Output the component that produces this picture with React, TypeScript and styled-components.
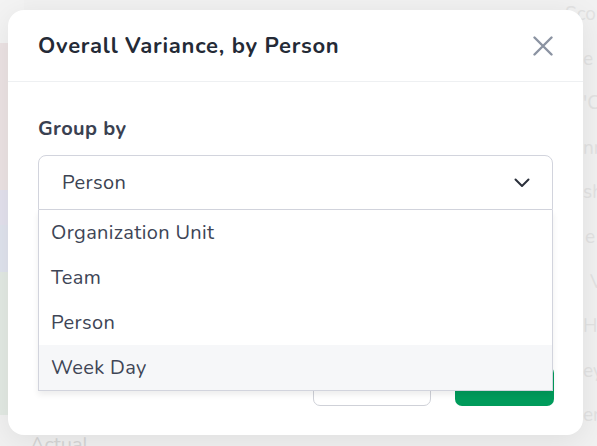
import React from "react";
import styled, { createGlobalStyle } from "styled-components";

const Global = createGlobalStyle`
  html, body { margin: 0; padding: 0; }
  body {
    width: 597px;
    height: 446px;
    overflow: hidden;
    background: #f2f2f2;
    font-family: "Nunito", "Lato", "Noto Sans", sans-serif;
  }
`;

const Page = styled.div`
  position: relative;
  width: 597px;
  height: 446px;
  display: flex;
  background: #f1f1f1;
`;

const LeftStrip = styled.div`
  width: 24px;
  display: flex;
  flex-direction: column;
`;

const StripBlock = styled.div<{ $h: number; $c: string }>`
  height: ${(p) => p.$h}px;
  background: ${(p) => p.$c};
  flex-shrink: 0;
`;

const Middle = styled.div`
  flex: 1;
  display: flex;
  flex-direction: column;
  justify-content: flex-end;
`;

const ActualText = styled.div`
  font-size: 20px;
  color: #d6d6d6;
  padding-left: 6px;
  height: 14px;
  line-height: 26px;
  overflow: hidden;
`;

const RightCol = styled.div`
  width: 32px;
  display: flex;
  flex-direction: column;
`;

const BgCell = styled.div<{ $indent: number }>`
  height: 45px;
  line-height: 28px;
  font-size: 19px;
  color: #e2e2e2;
  white-space: nowrap;
  overflow: hidden;
  padding-left: ${(p) => p.$indent}px;
`;

const Modal = styled.div`
  position: absolute;
  left: 8px;
  top: 10px;
  width: 575px;
  height: 425px;
  background: #ffffff;
  border-radius: 16px;
  box-shadow: 0 6px 30px rgba(0, 0, 0, 0.08);
  display: flex;
  flex-direction: column;
`;

const Header = styled.div`
  height: 72px;
  box-sizing: border-box;
  border-bottom: 1px solid #eef0f2;
  display: flex;
  align-items: center;
  justify-content: space-between;
  padding: 0 30px;
`;

const Title = styled.h2`
  margin: 0;
  font-size: 22px;
  font-weight: 700;
  color: #242a36;
  letter-spacing: 0.75px;
`;

const CloseButton = styled.button`
  border: none;
  background: none;
  padding: 0;
  width: 20px;
  height: 20px;
  display: flex;
  align-items: center;
  justify-content: center;
  cursor: pointer;
`;

const Body = styled.div`
  flex: 1;
  display: flex;
  flex-direction: column;
  padding: 34px 30px 0;
`;

const Label = styled.div`
  font-size: 20px;
  font-weight: 700;
  color: #3a4151;
  line-height: 26px;
  letter-spacing: 0.4px;
  margin-bottom: 13px;
`;

const SelectWrap = styled.div`
  position: relative;
`;

const SelectBox = styled.div`
  height: 55px;
  box-sizing: border-box;
  border: 1px solid #d2d4dd;
  border-radius: 8px 8px 0 0;
  display: flex;
  align-items: center;
  justify-content: space-between;
  padding: 0 22px 0 23px;
  font-size: 20px;
  letter-spacing: 0.35px;
  color: #3c4352;
`;

const Menu = styled.ul`
  position: absolute;
  top: 55px;
  left: 0;
  right: 0;
  margin: 0;
  padding: 0;
  list-style: none;
  background: #fff;
  border: 1px solid #d2d4dd;
  border-top: none;
  box-shadow: 0 4px 6px rgba(0, 0, 0, 0.07);
  z-index: 2;
`;

const MenuItem = styled.li<{ $active?: boolean }>`
  height: 45px;
  display: flex;
  align-items: center;
  padding-left: 12px;
  font-size: 20px;
  letter-spacing: 0.35px;
  color: #3e4556;
  background: ${(p) => (p.$active ? "#f6f7f9" : "#fff")};
`;

const Footer = styled.div`
  margin-top: auto;
  display: flex;
  justify-content: flex-end;
  gap: 24px;
  padding: 0 29px 29px 30px;
`;

const OutlineButton = styled.button`
  width: 118px;
  height: 40px;
  border: 1px solid #cfd1d8;
  background: #fff;
  border-radius: 7px;
`;

const PrimaryButton = styled.button`
  width: 99px;
  height: 40px;
  border: none;
  background: #009b5b;
  border-radius: 7px;
`;

const rightTexts: [string, number][] = [
  ["Sco", 0],
  ["e F", 18],
  ["'C", 18],
  ["nn", 18],
  ["sh", 18],
  ["e", 20],
  ["V", 25],
  ["H", 18],
  ["ey", 18],
  ["er", 18],
];

export default function App() {
  return (
    <>
      <Global />
      <Page>
        <LeftStrip>
          <StripBlock $h={43} $c="#f3f3f3" />
          <StripBlock $h={147} $c="#ece3e4" />
          <StripBlock $h={35} $c="#e4e2ee" />
          <StripBlock $h={47} $c="#e0e4ee" />
          <StripBlock $h={143} $c="#e3eae4" />
          <StripBlock $h={31} $c="#f1f1f1" />
        </LeftStrip>
        <Middle>
          <ActualText>Actual</ActualText>
        </Middle>
        <RightCol>
          {rightTexts.map(([t, indent], i) => (
            <BgCell key={i} $indent={indent}>
              {t}
            </BgCell>
          ))}
        </RightCol>
        <Modal>
          <Header>
            <Title>Overall Variance, by Person</Title>
            <CloseButton aria-label="Close">
              <svg width="20" height="20" viewBox="0 0 20 20">
                <path d="M1.5 1.5 L18.5 18.5 M18.5 1.5 L1.5 18.5" stroke="#8b93a2" strokeWidth="2.4" strokeLinecap="round" fill="none" />
              </svg>
            </CloseButton>
          </Header>
          <Body>
            <Label>Group by</Label>
            <SelectWrap>
              <SelectBox>
                <span>Person</span>
                <svg width="16" height="10" viewBox="0 0 16 10">
                  <path d="M1.5 1.5 L8 8 L14.5 1.5" stroke="#2b303b" strokeWidth="2" strokeLinecap="round" strokeLinejoin="round" fill="none" />
                </svg>
              </SelectBox>
              <Menu>
                <MenuItem>Organization Unit</MenuItem>
                <MenuItem>Team</MenuItem>
                <MenuItem>Person</MenuItem>
                <MenuItem $active>Week Day</MenuItem>
              </Menu>
            </SelectWrap>
          </Body>
          <Footer>
            <OutlineButton />
            <PrimaryButton />
          </Footer>
        </Modal>
      </Page>
    </>
  );
}
